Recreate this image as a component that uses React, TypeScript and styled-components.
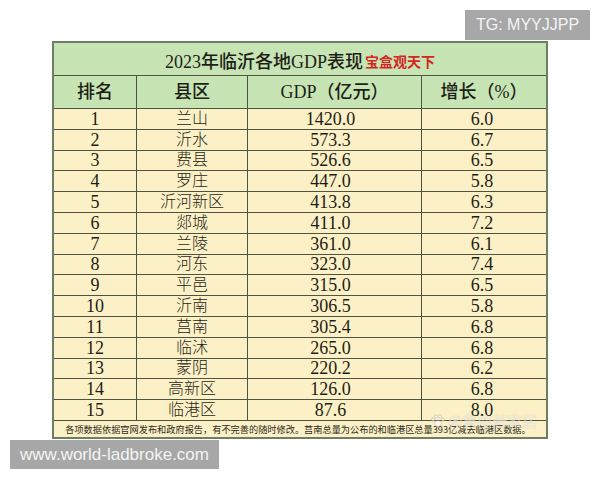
import React from "react";
import styled, { createGlobalStyle } from "styled-components";

const Global = createGlobalStyle`
  html, body { margin: 0; padding: 0; background: #ffffff; }
  body { font-family: "Liberation Serif", "Noto Sans CJK SC", serif; }
`;

const Page = styled.div`
  position: relative;
  width: 600px;
  height: 480px;
  box-sizing: border-box;
  padding: 41px 0 0 52px;
  background: #ffffff;
  overflow: hidden;
`;

const Table = styled.div`
  width: 496px;
  box-sizing: border-box;
  border: 2px solid #6f7d63;
  display: flex;
  flex-direction: column;
  color: #1e1e16;
`;

const TitleRow = styled.div`
  height: 33px;
  box-sizing: border-box;
  border-bottom: 1px solid #4f5442;
  background: #c7e4b5;
  display: flex;
  align-items: center;
  justify-content: center;
  font-family: "Liberation Serif", "Noto Sans CJK SC", serif;
  font-size: 18px;
  font-weight: 500;
  padding-top: 1px;
`;

const Brand = styled.span`
  color: #d3261e;
  font-size: 14px;
  font-weight: 700;
  margin-left: 2px;
  margin-top: 3px;
`;

const Row = styled.div<{ $h: number; $head?: boolean }>`
  display: grid;
  grid-template-columns: 83px 111px 174px 124px;
  height: ${(p) => p.$h}px;
  box-sizing: border-box;
  border-bottom: 1px solid #4f5442;
  background: ${(p) => (p.$head ? "#c7e4b5" : "#fcf0c6")};
`;

const Cell = styled.div<{ $head?: boolean; $last?: boolean; $shift?: number }>`
  display: flex;
  align-items: center;
  justify-content: center;
  box-sizing: border-box;
  border-right: ${(p) => (p.$last ? "none" : "1px solid #4f5442")};
  font-family: "Liberation Serif", "Noto Sans CJK SC", serif;
  font-size: ${(p) => (p.$head ? "18px" : "16px")};
  font-weight: ${(p) => (p.$head ? 500 : 300)};
  padding-right: ${(p) => p.$shift ?? 0}px;
  white-space: nowrap;
  line-height: 1;
`;

const Num = styled.span`
  font-family: "Liberation Serif", serif;
  font-size: 18px;
  font-weight: 400;
`;

const Footer = styled.div`
  height: 16px;
  background: #fcf0c6;
  display: flex;
  align-items: center;
  justify-content: center;
  font-family: "Noto Sans CJK SC", sans-serif;
  font-size: 9.2px;
  color: #2a2a20;
  white-space: nowrap;
  padding-right: 4px;
`;

const TagTG = styled.div`
  position: absolute;
  left: 465px;
  top: 10px;
  width: 125px;
  height: 30px;
  background: #a7a7a7;
  color: #f4f4f4;
  font-family: "Liberation Sans", sans-serif;
  font-size: 16px;
  display: flex;
  align-items: center;
  justify-content: center;
`;

const TagSite = styled.div`
  position: absolute;
  left: 10px;
  top: 440px;
  width: 209px;
  height: 29px;
  background: #a7a7a7;
  color: #f4f4f4;
  font-family: "Liberation Sans", sans-serif;
  font-size: 17px;
  display: flex;
  align-items: center;
  justify-content: center;
`;

const Mark = styled.div`
  position: absolute;
  left: 430px;
  top: 410px;
  display: flex;
  align-items: center;
  gap: 2px;
  color: rgba(255, 255, 255, 0.7);
  font-family: "Noto Sans CJK SC", sans-serif;
  font-size: 15px;
  text-shadow: 0 0 1px rgba(120, 120, 120, 0.5);
  opacity: 0.75;
  pointer-events: none;
`;

const rows: [string, string, string, string][] = [
  ["1", "兰山", "1420.0", "6.0"],
  ["2", "沂水", "573.3", "6.7"],
  ["3", "费县", "526.6", "6.5"],
  ["4", "罗庄", "447.0", "5.8"],
  ["5", "沂河新区", "413.8", "6.3"],
  ["6", "郯城", "411.0", "7.2"],
  ["7", "兰陵", "361.0", "6.1"],
  ["8", "河东", "323.0", "7.4"],
  ["9", "平邑", "315.0", "6.5"],
  ["10", "沂南", "306.5", "5.8"],
  ["11", "莒南", "305.4", "6.8"],
  ["12", "临沭", "265.0", "6.8"],
  ["13", "蒙阴", "220.2", "6.2"],
  ["14", "高新区", "126.0", "6.8"],
  ["15", "临港区", "87.6", "8.0"],
];

const Paw = () => (
  <svg width="16" height="16" viewBox="0 0 16 16">
    <g fill="rgba(255,255,255,0.8)" stroke="rgba(140,140,140,0.6)" strokeWidth="0.8">
      <ellipse cx="8" cy="10.5" rx="3.6" ry="3" />
      <circle cx="3" cy="6.5" r="1.6" />
      <circle cx="6" cy="3.5" r="1.6" />
      <circle cx="10" cy="3.5" r="1.6" />
      <circle cx="13" cy="6.5" r="1.6" />
    </g>
  </svg>
);

export default function App() {
  return (
    <>
      <Global />
      <Page>
        <Table>
          <TitleRow>
            2023年临沂各地GDP表现<Brand>宝盒观天下</Brand>
          </TitleRow>
          <Row $h={33} $head>
            <Cell $head>排名</Cell>
            <Cell $head>县区</Cell>
            <Cell $head>GDP（亿元）</Cell>
            <Cell $head $last>增长（%）</Cell>
          </Row>
          {rows.map((r) => (
            <Row key={r[0]} $h={20.8}>
              <Cell>
                <Num>{r[0]}</Num>
              </Cell>
              <Cell>{r[1]}</Cell>
              <Cell $shift={8}>
                <Num>{r[2]}</Num>
              </Cell>
              <Cell $last $shift={4}>
                <Num>{r[3]}</Num>
              </Cell>
            </Row>
          ))}
          <Footer>
            各项数据依据官网发布和政府报告，有不完善的随时修改。莒南总量为公布的和临港区总量393亿减去临港区数据。
          </Footer>
        </Table>
        <Mark>
          <Paw />
          <span>@鲁南若家居</span>
        </Mark>
        <TagTG>TG: MYYJJPP</TagTG>
        <TagSite>www.world-ladbroke.com</TagSite>
      </Page>
    </>
  );
}
